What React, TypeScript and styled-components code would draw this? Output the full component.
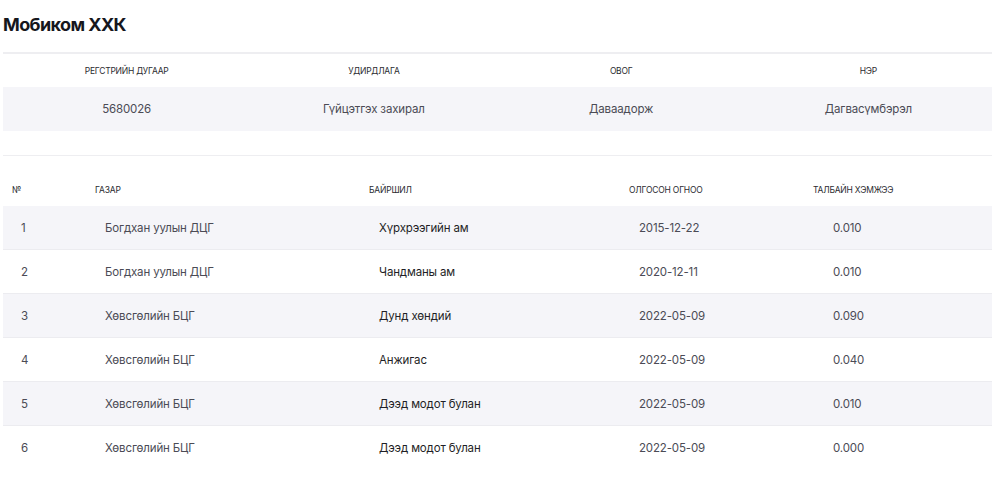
import React from "react";
import styled, { createGlobalStyle } from "styled-components";

const Global = createGlobalStyle`
  html, body { margin: 0; padding: 0; background: #ffffff; }
  body { font-family: Inter, "Noto Sans", "Liberation Sans", sans-serif; }
`;

const Page = styled.div`
  padding: 14px 8px 0 3px;
`;

const Title = styled.h1`
  margin: 0;
  height: 38px;
  font-size: 18px;
  line-height: 22px;
  font-weight: 700;
  color: #16171d;
  letter-spacing: -0.6px;
`;

const Divider = styled.div<{ $h?: number }>`
  height: ${(p) => p.$h ?? 1}px;
  background: #eeeef1;
`;

const InfoGrid = styled.div`
  display: grid;
  grid-template-columns: repeat(4, 1fr);
`;

const InfoHead = styled.div`
  height: 33px;
  display: flex;
  align-items: center;
  justify-content: center;
  font-size: 8.5px;
  color: #2b2b30;
  text-transform: uppercase;
  letter-spacing: -0.25px;
`;

const InfoValue = styled.div`
  height: 44px;
  display: flex;
  align-items: center;
  justify-content: center;
  background: #f5f5f9;
  font-size: 11.5px;
  letter-spacing: -0.15px;
  color: #4b4b55;
`;

const Spacer = styled.div`
  height: 24px;
`;

const Table = styled.div`
  display: grid;
  grid-template-columns: 83px 274px 260px 184px 1fr;
`;

const Th = styled.div<{ $pad: number }>`
  height: 50px;
  padding-left: ${(p) => p.$pad}px;
  padding-bottom: 11px;
  box-sizing: border-box;
  display: flex;
  align-items: flex-end;
  font-size: 8.5px;
  color: #2b2b30;
  text-transform: uppercase;
  letter-spacing: -0.2px;
`;

const Td = styled.div<{ $pad: number; $alt: boolean; $dark?: boolean; $last?: boolean }>`
  height: 44px;
  padding-left: ${(p) => p.$pad}px;
  box-sizing: border-box;
  display: flex;
  align-items: center;
  background: ${(p) => (p.$alt ? "#f5f5f9" : "#ffffff")};
  border-bottom: 1px solid ${(p) => (p.$last ? "transparent" : "#ececf0")};
  font-size: 11.5px;
  letter-spacing: -0.15px;
  color: ${(p) => (p.$dark ? "#1f1f26" : "#4b4b55")};
`;

const info = [
  ["Регстрийн дугаар", "5680026"],
  ["Удирдлага", "Гүйцэтгэх захирал"],
  ["Овог", "Даваадорж"],
  ["Нэр", "Дагвасүмбэрэл"],
];

const rows = [
  ["1", "Богдхан уулын ДЦГ", "Хүрхрээгийн ам", "2015-12-22", "0.010"],
  ["2", "Богдхан уулын ДЦГ", "Чандманы ам", "2020-12-11", "0.010"],
  ["3", "Хөвсгөлийн БЦГ", "Дунд хөндий", "2022-05-09", "0.090"],
  ["4", "Хөвсгөлийн БЦГ", "Анжигас", "2022-05-09", "0.040"],
  ["5", "Хөвсгөлийн БЦГ", "Дээд модот булан", "2022-05-09", "0.010"],
  ["6", "Хөвсгөлийн БЦГ", "Дээд модот булан", "2022-05-09", "0.000"],
];

const heads = ["№", "Газар", "Байршил", "Олгосон огноо", "Талбайн хэмжээ"];
const headPad = [9, 9, 9, 9, 9];
const cellPad = [18, 19, 19, 19, 29];

export default function App() {
  return (
    <>
      <Global />
      <Page>
        <Title>Мобиком ХХК</Title>
        <Divider $h={2} />
        <InfoGrid>
          {info.map(([h]) => (
            <InfoHead key={h}>{h}</InfoHead>
          ))}
          {info.map(([h, v]) => (
            <InfoValue key={h}>{v}</InfoValue>
          ))}
        </InfoGrid>
        <Spacer />
        <Divider $h={1} />
        <Table>
          {heads.map((h, i) => (
            <Th key={h} $pad={headPad[i]}>
              {h}
            </Th>
          ))}
          {rows.map((r, ri) =>
            r.map((c, ci) => (
              <Td
                key={`${ri}-${ci}`}
                $pad={cellPad[ci]}
                $alt={ri % 2 === 0}
                $dark={ci === 2}
                $last={ri === rows.length - 1}
              >
                {c}
              </Td>
            ))
          )}
        </Table>
      </Page>
    </>
  );
}
